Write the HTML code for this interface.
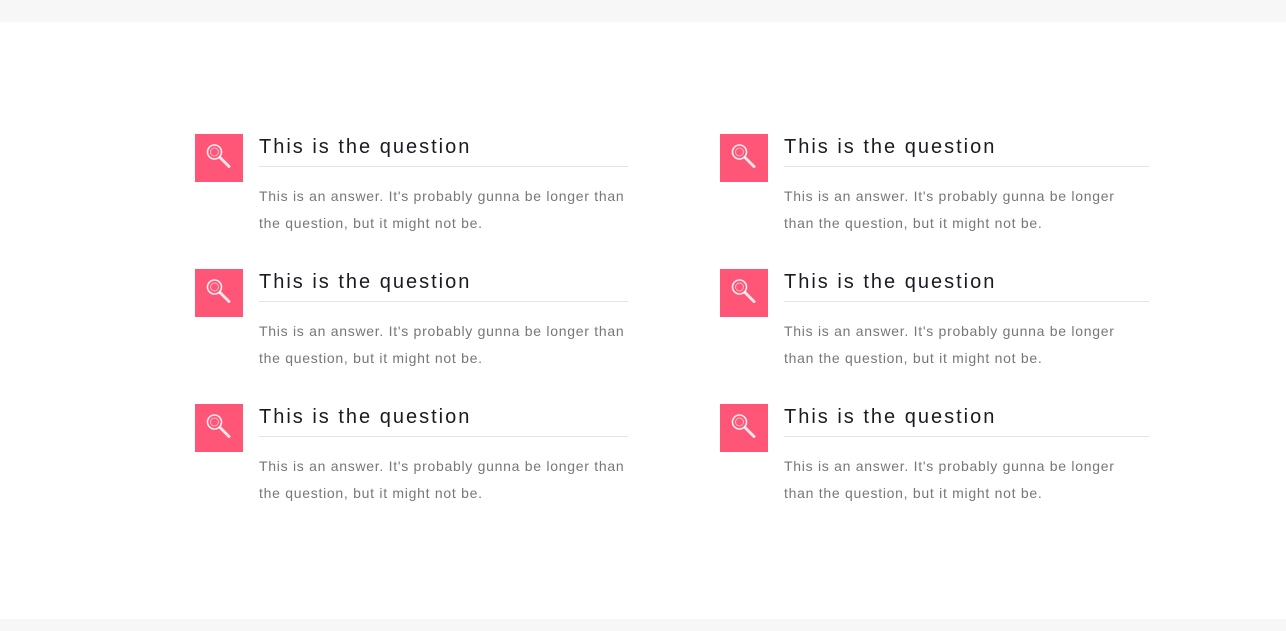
<!DOCTYPE html>
<html><head><style>
html,body{margin:0;padding:0;background:#fff;}
body{width:1286px;height:631px;position:relative;overflow:hidden;font-family:"Liberation Sans",sans-serif;}
.top{position:absolute;left:0;top:0;width:1286px;height:22px;background:#f7f7f7;}
.bot{position:absolute;left:0;top:619px;width:1286px;height:12px;background:#f7f7f7;}
.item{position:absolute;width:460px;height:120px;}
.ic{position:absolute;left:0;top:0;width:48px;height:48px;background:#ff5576;}
.ic svg{position:absolute;left:10px;top:8px;}
.q{position:absolute;left:64px;top:1px;font-size:20px;letter-spacing:2px;color:#1a1a22;line-height:24px;white-space:nowrap;}
.ln{position:absolute;left:64px;top:32px;height:1px;background:#e3e3e3;}
.a{position:absolute;left:64px;top:49px;font-size:14px;line-height:27px;color:#777;white-space:nowrap;letter-spacing:0.72px;}
</style></head><body>
<div class="top"></div><div class="bot"></div>

<div class="item" style="left:195px;top:134px"><div class="ic"><svg width="28" height="28" viewBox="0 0 28 28"><circle cx="9.5" cy="10" r="7" fill="none" stroke="#fff" stroke-width="1.6" opacity=".9"/><circle cx="9.5" cy="10" r="4" fill="none" stroke="#fff" stroke-width="1" opacity=".6"/><path d="M15 15.5 L24 24.5" stroke="#fff" stroke-width="3" stroke-linecap="round" opacity=".85"/></svg></div><div class="q">This is the question</div><div class="ln" style="width:369px"></div><div class="a">This is an answer. It's probably gunna be longer than<br>the question, but it might not be.</div></div>

<div class="item" style="left:720px;top:134px"><div class="ic"><svg width="28" height="28" viewBox="0 0 28 28"><circle cx="9.5" cy="10" r="7" fill="none" stroke="#fff" stroke-width="1.6" opacity=".9"/><circle cx="9.5" cy="10" r="4" fill="none" stroke="#fff" stroke-width="1" opacity=".6"/><path d="M15 15.5 L24 24.5" stroke="#fff" stroke-width="3" stroke-linecap="round" opacity=".85"/></svg></div><div class="q">This is the question</div><div class="ln" style="width:365px"></div><div class="a">This is an answer. It's probably gunna be longer<br>than the question, but it might not be.</div></div>

<div class="item" style="left:195px;top:269px"><div class="ic"><svg width="28" height="28" viewBox="0 0 28 28"><circle cx="9.5" cy="10" r="7" fill="none" stroke="#fff" stroke-width="1.6" opacity=".9"/><circle cx="9.5" cy="10" r="4" fill="none" stroke="#fff" stroke-width="1" opacity=".6"/><path d="M15 15.5 L24 24.5" stroke="#fff" stroke-width="3" stroke-linecap="round" opacity=".85"/></svg></div><div class="q">This is the question</div><div class="ln" style="width:369px"></div><div class="a">This is an answer. It's probably gunna be longer than<br>the question, but it might not be.</div></div>

<div class="item" style="left:720px;top:269px"><div class="ic"><svg width="28" height="28" viewBox="0 0 28 28"><circle cx="9.5" cy="10" r="7" fill="none" stroke="#fff" stroke-width="1.6" opacity=".9"/><circle cx="9.5" cy="10" r="4" fill="none" stroke="#fff" stroke-width="1" opacity=".6"/><path d="M15 15.5 L24 24.5" stroke="#fff" stroke-width="3" stroke-linecap="round" opacity=".85"/></svg></div><div class="q">This is the question</div><div class="ln" style="width:365px"></div><div class="a">This is an answer. It's probably gunna be longer<br>than the question, but it might not be.</div></div>

<div class="item" style="left:195px;top:404px"><div class="ic"><svg width="28" height="28" viewBox="0 0 28 28"><circle cx="9.5" cy="10" r="7" fill="none" stroke="#fff" stroke-width="1.6" opacity=".9"/><circle cx="9.5" cy="10" r="4" fill="none" stroke="#fff" stroke-width="1" opacity=".6"/><path d="M15 15.5 L24 24.5" stroke="#fff" stroke-width="3" stroke-linecap="round" opacity=".85"/></svg></div><div class="q">This is the question</div><div class="ln" style="width:369px"></div><div class="a">This is an answer. It's probably gunna be longer than<br>the question, but it might not be.</div></div>

<div class="item" style="left:720px;top:404px"><div class="ic"><svg width="28" height="28" viewBox="0 0 28 28"><circle cx="9.5" cy="10" r="7" fill="none" stroke="#fff" stroke-width="1.6" opacity=".9"/><circle cx="9.5" cy="10" r="4" fill="none" stroke="#fff" stroke-width="1" opacity=".6"/><path d="M15 15.5 L24 24.5" stroke="#fff" stroke-width="3" stroke-linecap="round" opacity=".85"/></svg></div><div class="q">This is the question</div><div class="ln" style="width:365px"></div><div class="a">This is an answer. It's probably gunna be longer<br>than the question, but it might not be.</div></div>
</body></html>
